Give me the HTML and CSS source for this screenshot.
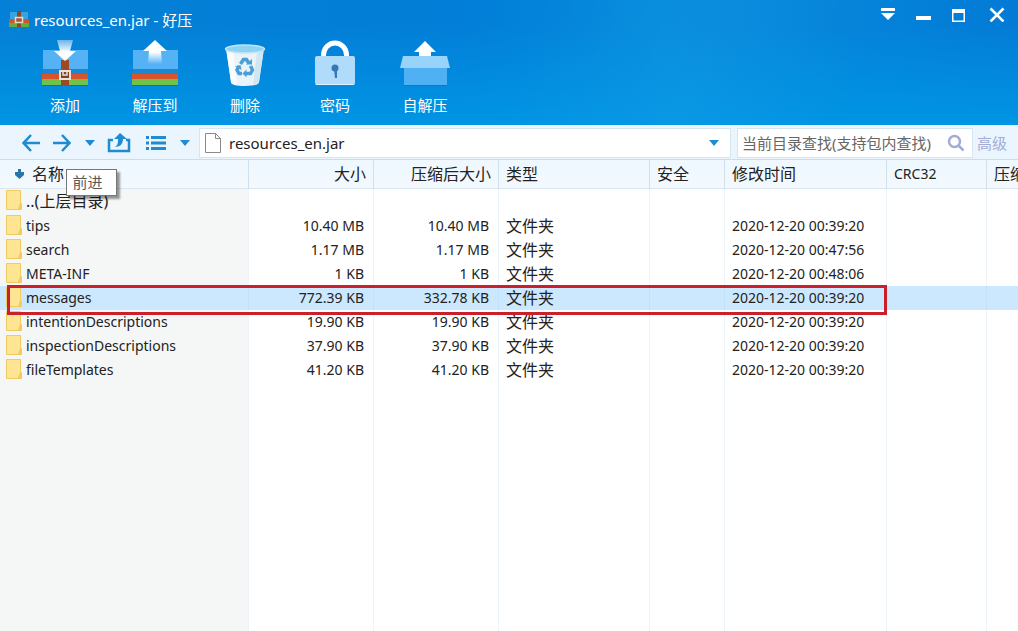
FILE: index.html
```html
<!DOCTYPE html>
<html lang="zh-CN">
<head>
    <meta charset="UTF-8">
    <meta name="viewport" content="width=device-width, initial-scale=1.0">
    <title>resources_en.jar - 好压</title>
    <link rel="stylesheet" href="styles.css">
</head>
<body>
    <!-- Folder symbol used by every row -->
    <svg class="symbols" width="0" height="0" aria-hidden="true">
        <symbol id="folder" viewBox="0 0 16 20">
            <path d="M0.5 0.5h14v12l1 1v6h-15z" fill="#fbe08a" stroke="#efcb62"/>
            <path d="M1 1h13v11l-2 7H1z" fill="#fde594"/>
            <path d="M14.5 12l-2.5 7h3.5v-5.5z" fill="#f3cd5c"/>
        </symbol>
        <symbol id="caret" viewBox="0 0 10 6">
            <path d="M0 0h10L5 6z"/>
        </symbol>
    </svg>

    <header class="app-header">
        <div class="title-bar">
            <svg class="app-icon" width="20" height="18" viewBox="0 0 20 18">
                <path d="M1 2h18v7H1z" fill="#3aa2df"/>
                <path d="M0 9h20v4H0z" fill="#d0552c"/>
                <path d="M0 13h20v4H0z" fill="#62ad3c"/>
                <path d="M8 1h4v16H8z" fill="#8c4a22"/>
                <path d="M6.5 7.5h7v5h-7z" fill="#9c5b36" stroke="#e4dcd4" stroke-width="1.5"/>
            </svg>
            <h1>resources_en.jar - 好压</h1>
            <div class="window-buttons">
                <button type="button" aria-label="菜单">
                    <svg width="16" height="16" viewBox="0 0 16 16" fill="#fff"><path d="M1 2h14v3H1zM1 7h14l-7 7z"/></svg>
                </button>
                <button type="button" aria-label="最小化">
                    <svg width="16" height="16" viewBox="0 0 16 16" fill="#fff"><path d="M1 10h15v4H1z"/></svg>
                </button>
                <button type="button" aria-label="最大化">
                    <svg width="16" height="16" viewBox="0 0 16 16" fill="#fff"><path fill-rule="evenodd" d="M2 3h13v13H2zM3.500 7v7.500h10V7z"/></svg>
                </button>
                <button type="button" class="close-btn" aria-label="关闭">
                    <svg width="16" height="16" viewBox="0 0 16 16" fill="none" stroke="#fff" stroke-width="2.5"><path d="M1.5 2.500l13 13M14.5 2.500l-13 13"/></svg>
                </button>
            </div>
        </div>

        <nav class="actions">
            <button type="button">
                <svg width="54" height="50" viewBox="0 0 54 50">
                    <defs>
                        <linearGradient id="arrowDown" x1="0" y1="0" x2="0" y2="1">
                            <stop offset="0" stop-color="#fff" stop-opacity="0.4"/>
                            <stop offset="0.6" stop-color="#fff"/>
                        </linearGradient>
                    </defs>
                    <path d="M5 12h45v20H5z" fill="#55b3f5"/>
                    <path d="M5 31h45v5H5z" fill="#1d86d0"/>
                    <path d="M4 36h46v5H4z" fill="#d9532b"/>
                    <path d="M4 41h46v6H4z" fill="#71c24a"/>
                    <path d="M4 47h46v1H4z" fill="#1b6fa8"/>
                    <path d="M23 22h8v26h-8z" fill="#9a4a24"/>
                    <path d="M22 33h10v8H22z" fill="#7c4127" stroke="#e8e2dc" stroke-width="2"/>
                    <path d="M25 34v3h4v-3" fill="none" stroke="#e8e2dc" stroke-width="1.5"/>
                    <path d="M19 2h16l-3 11h6L27 23 16 13h6z" fill="url(#arrowDown)"/>
                </svg>
                <span>添加</span>
            </button>
            <button type="button">
                <svg width="54" height="50" viewBox="0 0 54 50">
                    <defs>
                        <linearGradient id="arrowUp" x1="0" y1="0" x2="0" y2="1">
                            <stop offset="0.5" stop-color="#fff"/>
                            <stop offset="1" stop-color="#fff" stop-opacity="0"/>
                        </linearGradient>
                    </defs>
                    <path d="M5 12h45v20H5z" fill="#55b3f5"/>
                    <path d="M5 31h45v5H5z" fill="#1d86d0"/>
                    <path d="M4 36h46v5H4z" fill="#d9532b"/>
                    <path d="M4 41h46v6H4z" fill="#71c24a"/>
                    <path d="M4 47h46v1H4z" fill="#1b6fa8"/>
                    <path d="M27 2l12 11h-6l1 13H20l1-13h-6z" fill="url(#arrowUp)"/>
                </svg>
                <span>解压到</span>
            </button>
            <button type="button">
                <svg width="54" height="50" viewBox="0 0 54 50">
                    <path d="M8 10h38l-5 34q0 4-14 4t-14-4z" fill="#e9f3f8"/>
                    <path d="M8 10h7l4 37q-6-1-6-3z" fill="#f8fcfe"/>
                    <path d="M39 14h6.5L41 44q0 2-6 3z" fill="#cfe6f3"/>
                    <ellipse cx="27" cy="11" rx="19.5" ry="4" fill="#8fd2f2" stroke="#bfe6f8" stroke-width="1.5"/>
                    <g fill="none" stroke="#4a9fd8" stroke-width="3.5">
                        <path d="M22.5 26l3-4.5h3l2.5 4"/>
                        <path d="M32.5 28l2 4-2 3.5h-5"/>
                        <path d="M24 35.5h-3l-2-3.5 2-4"/>
                    </g>
                    <path d="M28 26.5h6v-5.5zM28.5 31.5v8l-4-4zM17 28.5l5.5-1.5 1 5z" fill="#4a9fd8"/>
                </svg>
                <span>删除</span>
            </button>
            <button type="button">
                <svg width="54" height="50" viewBox="0 0 54 50">
                    <path d="M15.5 20v-3a11.5 12 0 0 1 23 0v3" fill="none" stroke="#fff" stroke-width="5"/>
                    <rect x="7" y="18" width="40" height="29" rx="2" fill="#b0dbfa"/>
                    <path d="M8 46h38v1H8z" fill="#dff1fd"/>
                    <circle cx="27" cy="30" r="3.5" fill="#3579b4"/>
                    <path d="M26 31h3v9h-2z" fill="#3579b4"/>
                </svg>
                <span>密码</span>
            </button>
            <button type="button">
                <svg width="54" height="50" viewBox="0 0 54 50">
                    <path d="M27 3l11 11h-5v6H21v-6h-5z" fill="#fff"/>
                    <path d="M6 29h43v18H6z" fill="#50b0f4"/>
                    <path d="M5 18h44l3 12H2z" fill="#98d3fb"/>
                    <path d="M6 47h43v1H6z" fill="#1974b9"/>
                </svg>
                <span>自解压</span>
            </button>
        </nav>
    </header>

    <div class="toolbar">
        <button type="button" class="tool" aria-label="后退">
            <svg width="18" height="18" viewBox="0 0 18 18"><path d="M9 1L1.500 9 9 17M1.500 9H18" class="line"/></svg>
        </button>
        <div class="forward">
            <button type="button" class="tool" aria-label="前进">
                <svg width="18" height="18" viewBox="0 0 18 18"><path d="M9 1l7.5 8L9 17M16.500 9H0" class="line"/></svg>
            </button>
            <div class="tooltip">前进</div>
        </div>
        <button type="button" class="tool drop" aria-label="历史"><svg width="10" height="6"><use href="#caret"/></svg></button>
        <button type="button" class="tool up" aria-label="上层目录">
            <svg width="24" height="20" viewBox="0 0 24 20">
                <path d="M6 7H2v11h20V7h-3" class="line"/>
                <path d="M13 0l7 6h-4c0 5-3 8-8 8 3-2 3-4 3-8H7z"/>
            </svg>
        </button>
        <button type="button" class="tool list" aria-label="查看">
            <svg width="20" height="14" viewBox="0 0 20 14"><path d="M0 0h3v3H0zM5 0h15v3H5zM0 5.500h3v3H0zM5 5.500h15v3H5zM0 11h3v3H0zM5 11h15v3H5z"/></svg>
        </button>
        <button type="button" class="tool drop" aria-label="查看方式"><svg width="10" height="6"><use href="#caret"/></svg></button>

        <div class="address">
            <svg width="16" height="20" viewBox="0 0 16 20"><path d="M0.5 0.5h10l5 5v14H0.5zM10.5 0.5v5h5" fill="#fff" stroke="#8a8a8a"/></svg>
            <input type="text" value="resources_en.jar" aria-label="路径">
            <button type="button" class="tool" aria-label="展开路径"><svg width="10" height="6"><use href="#caret"/></svg></button>
        </div>
        <div class="search">
            <input type="text" placeholder="当前目录查找(支持包内查找)" aria-label="查找">
            <button type="button" class="tool" aria-label="搜索">
                <svg width="18" height="18" viewBox="0 0 18 18" fill="none" stroke="#a3acd6" stroke-width="2.5"><circle cx="7.5" cy="7.5" r="5.5"/><path d="M11.5 11.5l5 5"/></svg>
            </button>
        </div>
        <a href="#" class="advanced">高级</a>
    </div>

    <main class="file-list">
        <table>
            <colgroup>
                <col class="col-name">
                <col class="col-size">
                <col class="col-size">
                <col class="col-type">
                <col class="col-safe">
                <col class="col-date">
                <col class="col-crc">
                <col>
            </colgroup>
            <thead>
                <tr>
                    <th><svg width="9" height="10" viewBox="0 0 9 10"><path d="M3 0h3v3h3v3l-4.5 4L0 6V3h3z" fill="#2478a8"/></svg>名称</th>
                    <th class="num">大小</th>
                    <th class="num">压缩后大小</th>
                    <th>类型</th>
                    <th>安全</th>
                    <th>修改时间</th>
                    <th class="crc">CRC32</th>
                    <th>压缩</th>
                </tr>
            </thead>
            <tbody>
                <tr>
                    <td><svg width="16" height="20"><use href="#folder"/></svg><span class="parent">..(上层目录)</span></td>
                    <td></td><td></td><td></td><td></td><td></td><td></td><td></td>
                </tr>
                <tr>
                    <td><svg width="16" height="20"><use href="#folder"/></svg>tips</td>
                    <td class="num">10.40 MB</td>
                    <td class="num">10.40 MB</td>
                    <td class="type">文件夹</td>
                    <td></td>
                    <td>2020-12-20 00:39:20</td>
                    <td></td><td></td>
                </tr>
                <tr>
                    <td><svg width="16" height="20"><use href="#folder"/></svg>search</td>
                    <td class="num">1.17 MB</td>
                    <td class="num">1.17 MB</td>
                    <td class="type">文件夹</td>
                    <td></td>
                    <td>2020-12-20 00:47:56</td>
                    <td></td><td></td>
                </tr>
                <tr>
                    <td><svg width="16" height="20"><use href="#folder"/></svg>META-INF</td>
                    <td class="num">1 KB</td>
                    <td class="num">1 KB</td>
                    <td class="type">文件夹</td>
                    <td></td>
                    <td>2020-12-20 00:48:06</td>
                    <td></td><td></td>
                </tr>
                <tr class="selected">
                    <td><svg width="16" height="20"><use href="#folder"/></svg>messages<div class="marker"></div></td>
                    <td class="num">772.39 KB</td>
                    <td class="num">332.78 KB</td>
                    <td class="type">文件夹</td>
                    <td></td>
                    <td>2020-12-20 00:39:20</td>
                    <td></td><td></td>
                </tr>
                <tr>
                    <td><svg width="16" height="20"><use href="#folder"/></svg>intentionDescriptions</td>
                    <td class="num">19.90 KB</td>
                    <td class="num">19.90 KB</td>
                    <td class="type">文件夹</td>
                    <td></td>
                    <td>2020-12-20 00:39:20</td>
                    <td></td><td></td>
                </tr>
                <tr>
                    <td><svg width="16" height="20"><use href="#folder"/></svg>inspectionDescriptions</td>
                    <td class="num">37.90 KB</td>
                    <td class="num">37.90 KB</td>
                    <td class="type">文件夹</td>
                    <td></td>
                    <td>2020-12-20 00:39:20</td>
                    <td></td><td></td>
                </tr>
                <tr>
                    <td><svg width="16" height="20"><use href="#folder"/></svg>fileTemplates</td>
                    <td class="num">41.20 KB</td>
                    <td class="num">41.20 KB</td>
                    <td class="type">文件夹</td>
                    <td></td>
                    <td>2020-12-20 00:39:20</td>
                    <td></td><td></td>
                </tr>
                <!-- Empty row keeps the column lines going down -->
                <tr class="filler">
                    <td></td><td></td><td></td><td></td><td></td><td></td><td></td><td></td>
                </tr>
            </tbody>
        </table>
    </main>
</body>
</html>
```
FILE: styles.css
```css
/* Basic Reset */
* {
    margin: 0;
    padding: 0;
    box-sizing: border-box;
}

body {
    display: flex;
    flex-direction: column;
    height: 100vh;
    overflow: hidden;
    background: #fff;
    color: #222;
    font-family: "Noto Sans", "Noto Sans CJK SC", sans-serif;
    font-size: 14px;
}

button,
input {
    border: none;
    background: none;
    font: inherit;
    color: inherit;
}

svg {
    display: block;
    flex: none;
}

.symbols {
    position: absolute;
}

/* Blue header */
.app-header {
    padding-bottom: 9px;
    color: #fff;
    background:
        linear-gradient(115deg, transparent 50%, rgba(255, 255, 255, 0.03) 68%, transparent 84%),
        linear-gradient(180deg, rgba(0, 149, 228, 0) 20%, #0095e4 100%),
        linear-gradient(90deg, #0480d6 0%, #027ed8 45%, #048cdd 65%, #037bd6 100%);
}

.title-bar {
    display: flex;
    align-items: center;
    height: 38px;
    padding-left: 9px;
}

.title-bar h1 {
    margin-left: 5px;
    font-size: 15px;
    font-weight: 400;
}

.window-buttons {
    display: flex;
    align-self: flex-start;
    margin-left: auto;
    padding: 6px 13px 0 0;
}

.window-buttons button {
    display: flex;
    justify-content: center;
    width: 35px;
}

.window-buttons .close-btn {
    width: 16px;
    margin-left: 14px;
}

.actions {
    display: flex;
    padding-left: 20px;
}

.actions button {
    display: flex;
    flex-direction: column;
    align-items: center;
    gap: 6px;
    width: 90px;
    font-size: 15px;
    line-height: 22px;
}

/* Toolbar */
.toolbar {
    display: flex;
    align-items: center;
    height: 35px;
    padding: 3px 11px 2px 15px;
    background: #eaf5fd;
    border-bottom: 1px solid #cbdcea;
}

.tool {
    display: flex;
    align-items: center;
    justify-content: center;
    width: 31px;
    height: 30px;
    fill: #1f8bd0;
}

.line {
    fill: none;
    stroke: #1f8bd0;
    stroke-width: 2.5;
}

.forward {
    position: relative;
}

.drop {
    width: 26px;
}

.up {
    width: 32px;
}

.list {
    width: 42px;
}

.list + .drop {
    width: 16px;
}

.address,
.search {
    display: flex;
    align-items: center;
    height: 30px;
    background: #fff;
    border: 1px solid #d5e6f3;
}

.address {
    flex: 1;
    margin-left: 6px;
    padding-left: 5px;
}

.address input {
    flex: 1;
    min-width: 0;
    margin-left: 8px;
    font-size: 15px;
}

.search {
    width: 236px;
    margin: 0 4px 0 6px;
    padding-left: 4px;
    font-size: 15px;
}

.search input {
    flex: 1;
    min-width: 0;
}

.search input::placeholder {
    color: #666;
}

.advanced {
    color: #a3acd6;
    font-size: 15px;
    text-decoration: none;
}

.tooltip {
    position: absolute;
    top: 41px;
    left: 20px;
    z-index: 2;
    width: 51px;
    border: 1px solid #767676;
    background: #fff;
    color: #575757;
    font-size: 15px;
    line-height: 25px;
    padding-right: 8px;
    text-align: center;
    box-shadow: 3px 3px 2px rgba(0, 0, 0, 0.4);
}

/* File list */
.file-list {
    flex: 1;
    min-height: 0;
}

table {
    width: 100%;
    height: 100%;
    table-layout: fixed;
    border-collapse: separate;
    border-spacing: 0;
}

.col-name {
    width: 249px;
}

.col-size {
    width: 125px;
}

.col-type {
    width: 151px;
}

.col-safe {
    width: 75px;
}

.col-date {
    width: 162px;
}

.col-crc {
    width: 100px;
}

th {
    height: 29px;
    padding: 0 7px;
    overflow: hidden;
    background: linear-gradient(#eef8fe, #f3f9fe);
    border-right: 1px solid #cfdfeb;
    border-bottom: 1px solid #d9e6f0;
    font-size: 16px;
    font-weight: 400;
    line-height: 24px;
    text-align: left;
    white-space: nowrap;
}

th svg {
    display: inline-block;
    margin: 0 8px 4px;
    vertical-align: middle;
}

th.crc {
    font-size: 14px;
}

td {
    height: 24px;
    padding: 0 7px;
    border-right: 1px solid #edf4f9;
    line-height: 24px;
    white-space: nowrap;
}

th:last-child,
td:last-child {
    border-right: none;
}

td:first-child {
    padding-left: 6px;
    background: #f5f6f6;
}

td svg {
    float: left;
    margin: 1px 4px 0 0;
}

.num {
    text-align: right;
}

td.num {
    padding-right: 9px;
}

.type,
.parent {
    font-size: 16px;
}

.selected {
    position: relative;
}

.selected td,
.selected td:first-child {
    background: #cce8ff;
    border-right-color: #c4e1f7;
}

.filler td {
    height: auto;
}

/* Red frame around the selected row, up to the date column */
.marker {
    position: absolute;
    top: -1px;
    left: 7px;
    z-index: 1;
    width: 880px;
    height: 30px;
    border: 3px solid #c9202c;
}
```
